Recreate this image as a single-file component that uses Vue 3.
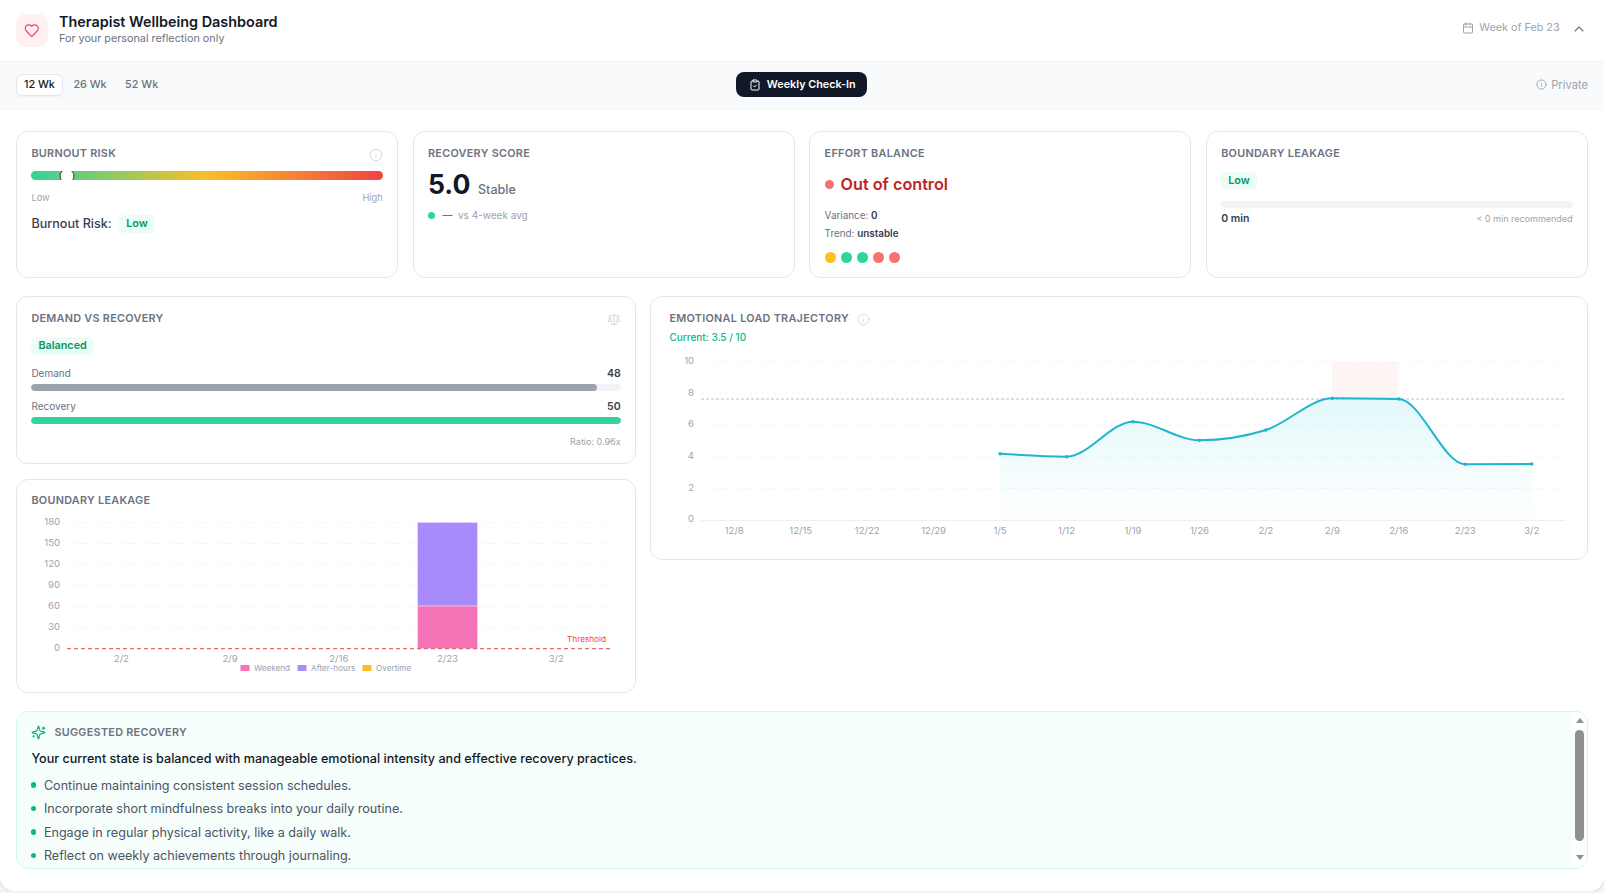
<script setup>
const gaugeStops = 'linear-gradient(90deg,#34d399 0%,#fbbf24 50%,#ef4444 100%)'

const emoTicks = ['12/8','12/15','12/22','12/29','1/5','1/12','1/19','1/26','2/2','2/9','2/16','2/23','3/2']
const emoLeft = 701, emoStep = 66.46
const emoX = i => emoLeft + emoStep * (i + 0.5)
const emoY = [10, 8, 6, 4, 2, 0].map(v => ({ v, y: 519.3 - v * 15.83 }))
const emoPts = [[4,452.7],[5,455.7],[6,420.7],[7,439.3],[8,429],[9,397.3],[10,398],[11,463.3],[12,463]]
  .map(([i, y]) => [emoX(i), y])

// monotone cubic interpolation (same shape as d3 curveMonotoneX)
function monotone(p) {
  const n = p.length, m = [], d = []
  for (let i = 0; i < n - 1; i++) d.push((p[i + 1][1] - p[i][1]) / (p[i + 1][0] - p[i][0]))
  for (let i = 1; i < n - 1; i++) {
    const s = d[i - 1] * d[i] <= 0 ? 0 : (Math.sign(d[i - 1]) + Math.sign(d[i])) * Math.min(Math.abs(d[i - 1]), Math.abs(d[i]), Math.abs((d[i - 1] + d[i]) / 2))
    m[i] = s
  }
  m[0] = (3 * d[0] - m[1]) / 2
  m[n - 1] = (3 * d[n - 2] - m[n - 2]) / 2
  let s = `M${p[0][0]},${p[0][1]}`
  for (let i = 0; i < n - 1; i++) {
    const h = (p[i + 1][0] - p[i][0]) / 3
    s += `C${p[i][0] + h},${p[i][1] + m[i] * h},${p[i + 1][0] - h},${p[i + 1][1] - m[i + 1] * h},${p[i + 1][0]},${p[i + 1][1]}`
  }
  return s
}
const emoLine = monotone(emoPts)
const emoArea = `${emoLine}L${emoPts[emoPts.length - 1][0]},519.3L${emoPts[0][0]},519.3Z`

const leakY = [180, 150, 120, 90, 60, 30, 0].map(v => ({ v, y: 648.7 - v * 0.7017 }))
const leakTicks = ['2/2', '2/9', '2/16', '2/23', '3/2'].map((t, i) => ({ t, x: 67 + 108.72 * (i + 0.5) }))
const legend = [
  { label: 'Weekend', color: '#f472b6', sx: 240.5, tx: 254 },
  { label: 'After-hours', color: '#a78bfa', sx: 297.5, tx: 311 },
  { label: 'Overtime', color: '#fbbf24', sx: 362.5, tx: 376 }
]
const effortDots = ['#fbbf24', '#34d399', '#34d399', '#f87171', '#f87171']
const tips = [
  'Continue maintaining consistent session schedules.',
  'Incorporate short mindfulness breaks into your daily routine.',
  'Engage in regular physical activity, like a daily walk.',
  'Reflect on weekly achievements through journaling.'
]
</script>

<template>
  <div class="shell">
    <header class="head">
      <div class="brand">
        <div class="heart-box">
          <svg class="ico" width="15.5" height="15.5" viewBox="0 0 24 24" stroke="#f43f5e" stroke-width="1.9"><path d="M19 14c1.49-1.46 3-3.21 3-5.5A5.5 5.5 0 0 0 16.5 3c-1.76 0-3 .5-4.5 2-1.5-1.5-2.74-2-4.5-2A5.5 5.5 0 0 0 2 8.5c0 2.3 1.5 4.05 3 5.5l7 7Z"/></svg>
        </div>
        <div class="brand-text">
          <h1>Therapist Wellbeing Dashboard</h1>
          <p>For your personal reflection only</p>
        </div>
      </div>
      <div class="head-right">
        <svg class="ico" width="12" height="12" viewBox="0 0 24 24" stroke="#9ca3af" stroke-width="2"><path d="M8 2v4M16 2v4"/><rect x="3" y="4" width="18" height="18" rx="2"/><path d="M3 10h18"/></svg>
        <span>Week of Feb 23</span>
        <svg class="ico chev" width="16" height="16" viewBox="0 0 24 24" stroke="#6b7280" stroke-width="1.7"><path d="m18 15-6-6-6 6"/></svg>
      </div>
    </header>

    <div class="bar">
      <div class="ranges">
        <button class="range on">12 Wk</button>
        <button class="range">26 Wk</button>
        <button class="range">52 Wk</button>
      </div>
      <button class="checkin">
        <svg class="ico" width="12" height="12" viewBox="0 0 24 24" stroke="#fff" stroke-width="2"><rect x="8" y="2" width="8" height="4" rx="1"/><path d="M16 4h2a2 2 0 0 1 2 2v14a2 2 0 0 1-2 2H6a2 2 0 0 1-2-2V6a2 2 0 0 1 2-2h2"/><path d="m9 14 2 2 4-4"/></svg>
        Weekly Check-In
      </button>
      <div class="private">
        <svg class="ico" width="11" height="11" viewBox="0 0 24 24" stroke="#9ca3af" stroke-width="2"><circle cx="12" cy="12" r="10"/><path d="M12 16v-4M12 8h.01"/></svg>
        Private
      </div>
    </div>

    <main class="main">
      <section class="kpis">
        <article class="card kpi">
          <div class="title-row">
            <h2>Burnout Risk</h2>
            <svg class="ico info" width="14" height="14" viewBox="0 0 24 24" stroke="#d1d5db" stroke-width="1.6"><circle cx="12" cy="12" r="10"/><path d="M12 16v-4M12 8h.01"/></svg>
          </div>
          <div class="gauge" :style="{ background: gaugeStops }"><span class="thumb"></span></div>
          <div class="gauge-ends"><span>Low</span><span>High</span></div>
          <div class="risk-line"><span>Burnout Risk:</span><span class="pill">Low</span></div>
        </article>

        <article class="card kpi">
          <h2>Recovery Score</h2>
          <div class="score"><strong>5.0</strong><span>Stable</span></div>
          <div class="delta"><i></i><b>—</b><span>vs 4-week avg</span></div>
        </article>

        <article class="card kpi">
          <h2>Effort Balance</h2>
          <div class="effort"><i></i>Out of control</div>
          <p class="meta first">Variance: <b>0</b></p>
          <p class="meta">Trend: <b>unstable</b></p>
          <div class="dots"><i v-for="(c, n) in effortDots" :key="n" :style="{ background: c }"></i></div>
        </article>

        <article class="card kpi">
          <h2>Boundary Leakage</h2>
          <span class="pill leak-pill">Low</span>
          <div class="track leak-track"></div>
          <div class="leak-foot"><b>0 min</b><span>&lt; 0 min recommended</span></div>
        </article>
      </section>

      <section class="mid">
        <div class="mid-left">
          <article class="card demand">
            <div class="title-row">
              <h2>Demand vs Recovery</h2>
              <svg class="ico" width="14" height="14" viewBox="0 0 24 24" stroke="#d1d5db" stroke-width="1.6"><path d="m16 16 3-8 3 8c-.87.65-1.92 1-3 1s-2.13-.35-3-1Z"/><path d="m2 16 3-8 3 8c-.87.65-1.92 1-3 1s-2.13-.35-3-1Z"/><path d="M7 21h10M12 3v18M3 7h2c2 0 5-1 7-2 2 1 5 2 7 2h2"/></svg>
            </div>
            <span class="pill balanced">Balanced</span>
            <div class="metric first"><span>Demand</span><b>48</b></div>
            <div class="track"><div class="fill grey" :style="{ width: '96%' }"></div></div>
            <div class="metric"><span>Recovery</span><b>50</b></div>
            <div class="track"><div class="fill green" :style="{ width: '100%' }"></div></div>
            <div class="ratio">Ratio: 0.96x</div>
          </article>

          <article class="card leakage">
            <h2>Boundary Leakage</h2>
            <svg class="chart" width="590" height="172" viewBox="31 510 590 172">
              <g v-for="g in leakY" :key="g.v">
                <line v-if="g.v" x1="67" x2="610.7" :y1="g.y" :y2="g.y" stroke="#f3f4f6" stroke-dasharray="3 3"/>
                <text class="tick" x="60" :y="g.y + 2.5" text-anchor="end">{{ g.v }}</text>
              </g>
              <rect x="417.5" y="522.3" width="60" height="84" fill="#a78bfa" stroke="#ede9fe" stroke-width=".6"/>
              <rect x="417.5" y="606" width="60" height="42.7" fill="#f472b6" stroke="#fce7f3" stroke-width=".6"/>
              <line x1="67" x2="610.7" y1="648.7" y2="648.7" stroke="#e36a6a" stroke-width="1.2" stroke-dasharray="4 3"/>
              <text class="thresh" x="606" y="642" text-anchor="end">Threshold</text>
              <text v-for="t in leakTicks" :key="t.t" class="tick" :x="t.x" y="661.5" text-anchor="middle">{{ t.t }}</text>
              <g v-for="l in legend" :key="l.label">
                <rect :x="l.sx" y="665" width="9" height="6" :fill="l.color"/>
                <text class="tick legend" :x="l.tx" y="670.5">{{ l.label }}</text>
              </g>
            </svg>
          </article>
        </div>

        <article class="card emotional">
          <div class="emo-title">
            <h2>Emotional Load Trajectory</h2>
            <svg class="ico" width="13" height="13" viewBox="0 0 24 24" stroke="#d1d5db" stroke-width="1.6"><circle cx="12" cy="12" r="10"/><path d="M12 16v-4M12 8h.01"/></svg>
          </div>
          <div class="current">Current: 3.5 / 10</div>
          <svg class="chart" width="896" height="190" viewBox="669 350 896 190">
            <defs>
              <linearGradient id="emoFill" x1="0" y1="0" x2="0" y2="1">
                <stop offset="0" stop-color="#14c8d8" stop-opacity=".12"/>
                <stop offset="1" stop-color="#14c8d8" stop-opacity="0"/>
              </linearGradient>
            </defs>
            <g v-for="g in emoY" :key="g.v">
              <line v-if="g.v" x1="701" x2="1565" :y1="g.y" :y2="g.y" stroke="#f3f4f6" stroke-dasharray="3 3"/>
              <text class="tick" x="694" :y="g.y + 2" text-anchor="end">{{ g.v }}</text>
            </g>
            <rect x="1332" y="361" width="66.5" height="37" fill="#fef2f2" fill-opacity=".8"/>
            <path :d="emoArea" fill="url(#emoFill)"/>
            <line x1="701" x2="1565" y1="398" y2="398" stroke="#b8bec8" stroke-width="1" stroke-dasharray="3 2"/>
            <line x1="701" x2="1565" y1="519.3" y2="519.3" stroke="#e5edf0"/>
            <path :d="emoLine" fill="none" stroke="#1fb5cf" stroke-width="2"/>
            <circle v-for="(p, n) in emoPts" :key="n" :cx="p[0]" :cy="p[1]" r="1.8" fill="#1fb5cf"/>
            <text v-for="(t, n) in emoTicks" :key="t" class="tick" :x="emoX(n)" y="533" text-anchor="middle">{{ t }}</text>
          </svg>
        </article>
      </section>

      <section class="recovery">
        <div class="rec-head">
          <svg class="ico" width="15" height="15" viewBox="0 0 24 24" stroke="#10b981" stroke-width="2"><path d="M9.937 15.5A2 2 0 0 0 8.5 14.063l-6.135-1.582a.5.5 0 0 1 0-.962L8.5 9.936A2 2 0 0 0 9.937 8.5l1.582-6.135a.5.5 0 0 1 .963 0L14.063 8.5A2 2 0 0 0 15.5 9.937l6.135 1.581a.5.5 0 0 1 0 .964L15.5 14.063a2 2 0 0 0-1.437 1.437l-1.582 6.135a.5.5 0 0 1-.963 0z"/><path d="M20 3v4M22 5h-4M4 17v2M5 18H3"/></svg>
          <h2>Suggested Recovery</h2>
        </div>
        <p class="lead">Your current state is balanced with manageable emotional intensity and effective recovery practices.</p>
        <ul>
          <li v-for="t in tips" :key="t">{{ t }}</li>
        </ul>
        <div class="scroll" aria-hidden="true">
          <i class="arrow up"></i>
          <i class="knob"></i>
          <i class="arrow down"></i>
        </div>
      </section>
    </main>
  </div>
</template>

<style>
html, body { background: #f3f4f6; }
</style>

<style scoped>
* { box-sizing: border-box; }
.shell {
  height: 891px;
  background: #fff;
  border-radius: 0 0 14px 14px;
  box-shadow: 0 1px 2px rgba(0, 0, 0, .12);
  font-family: Inter, "Liberation Sans", sans-serif;
  color: #111827;
  overflow: hidden;
}
h1, h2, p, ul { margin: 0; padding: 0; }
.ico { fill: none; stroke-linecap: round; stroke-linejoin: round; flex: none; display: block; }

.head {
  height: 62px;
  padding: 0 16px;
  display: flex;
  align-items: center;
  justify-content: space-between;
  border-bottom: 1px solid #f3f4f6;
}
.brand { display: flex; align-items: center; gap: 11px; }
.brand-text { margin-top: -3px; }
.heart-box {
  width: 32px; height: 33px;
  background: #fff1f2;
  border-radius: 9px;
  display: flex; align-items: center; justify-content: center;
}
h1 { font-size: 14.4px; font-weight: 600; line-height: 18px; color: #111827; }
.brand p { margin-top: 1px; font-size: 10.8px; line-height: 14px; color: #6b7280; }
.head-right {
  display: flex; align-items: center; gap: 5px;
  font-size: 10.8px; color: #9ca3af;
  margin-top: -6px;
}
.chev { margin: 3px 1px 0 6.4px; }

.bar {
  height: 48px;
  padding: 0 16px 2px;
  display: grid;
  grid-template-columns: 1fr auto 1fr;
  align-items: center;
  background: #f9fafb;
  border-bottom: 1px solid #f3f4f6;
}
.ranges { display: flex; align-items: center; gap: 2.5px; }
button { font-family: inherit; border: 0; background: none; }
.range {
  height: 22px; padding: 0 7px;
  font-size: 10.8px; font-weight: 500;
  color: #6b7280;
  border: 1px solid transparent;
  border-radius: 6px;
}
.range.on {
  background: #fff; color: #111827;
  border-color: #e5e7eb;
  box-shadow: 0 1px 2px rgba(0, 0, 0, .05);
}
.checkin {
  height: 25px; width: 131px;
  margin-left: -1.5px;
  padding: 0 0 0 2px;
  display: flex; align-items: center; justify-content: center; gap: 6px;
  background: #111827;
  color: #fff;
  font-size: 10.8px; font-weight: 600;
  border-radius: 8px;
}
.private {
  justify-self: end;
  display: flex; align-items: center; gap: 4px;
  font-size: 11.2px; color: #9ca3af;
}

.main { padding: 21px 16px 0; }
.card {
  background: #fff;
  border: 1px solid #e5e7eb;
  border-radius: 12px;
}
h2 {
  font-size: 10.8px;
  font-weight: 600;
  line-height: 14px;
  letter-spacing: .3px;
  text-transform: uppercase;
  color: #6b7280;
}
.title-row { display: flex; justify-content: space-between; align-items: flex-start; }
.kpis {
  display: grid;
  grid-template-columns: repeat(4, 1fr);
  gap: 14.4px;
}
.kpi { height: 147px; padding: 15px 14.4px; }
.info { margin-top: 1px; }

.gauge {
  position: relative;
  height: 9px;
  margin-top: 9px;
  border-radius: 5px;
  overflow: hidden;
}
.thumb {
  position: absolute;
  left: 10%; top: 50%;
  width: 15px; height: 15px;
  transform: translate(-50%, -50%);
  background: #fff;
  border: 1.5px solid #1f3f38;
  border-radius: 50%;
}
.gauge-ends {
  display: flex; justify-content: space-between;
  margin-top: 11.5px;
  font-size: 9.3px; line-height: 12px;
  color: #9ca3af;
}
.risk-line {
  display: flex; align-items: center; gap: 7.5px;
  margin-top: 11px;
  font-size: 12.6px; font-weight: 500; color: #374151;
}
.pill {
  display: inline-block;
  height: 18px; padding: 0 7px;
  font-size: 10.8px; font-weight: 600; line-height: 18px;
  color: #059669;
  background: #ecfdf5;
  border-radius: 6px;
}

.score { display: flex; align-items: baseline; gap: 7.5px; margin-top: 5px; }
.score strong { font-size: 26.6px; line-height: 36px; font-weight: 700; color: #111827; }
.score span { font-size: 12.6px; font-weight: 500; color: #6b7280; }
.delta { display: flex; align-items: center; gap: 7.5px; margin-top: 6px; font-size: 10px; line-height: 14px; color: #9ca3af; }
.delta i { width: 7px; height: 7px; border-radius: 50%; background: #34d399; }
.delta b { font-weight: 500; color: #6b7280; width: 9px; margin-right: -1px; }

.effort {
  display: flex; align-items: center; gap: 7px;
  margin-top: 13px;
  font-size: 16.2px; font-weight: 600; line-height: 20px;
  color: #c02424;
}
.effort i { width: 9px; height: 9px; border-radius: 50%; background: #f87171; }
.meta { font-size: 9.9px; line-height: 14px; color: #6b7280; margin-top: 4px; }
.meta.first { margin-top: 14px; }
.meta b { font-weight: 600; color: #374151; }
.dots { display: flex; gap: 5.2px; margin-top: 12px; }
.dots i { width: 11px; height: 11px; border-radius: 50%; }

.leak-pill { display: table; margin-top: 11px; }
.track { height: 7px; background: #f3f4f6; border-radius: 4px; overflow: hidden; }
.leak-track { margin-top: 11px; }
.leak-foot {
  display: flex; align-items: center; justify-content: space-between;
  margin-top: 4px;
  font-size: 10.5px; line-height: 14px; color: #374151;
}
.leak-foot b { font-weight: 600; }
.leak-foot span { font-size: 9px; font-weight: 400; color: #9ca3af; }

.mid {
  display: grid;
  grid-template-columns: 620px 1fr;
  gap: 14.4px;
  margin-top: 18px;
  align-items: start;
}
.mid-left { display: flex; flex-direction: column; gap: 14.5px; }
.demand { height: 168px; padding: 15px 14.4px; }
.balanced { margin-top: 11px; }
.metric {
  display: flex; justify-content: space-between; align-items: center;
  height: 14px;
  margin-top: 8px;
  font-size: 10px; color: #6b7280;
}
.metric.first { margin-top: 11px; }
.metric b { font-size: 10.5px; font-weight: 600; color: #374151; }
.metric + .track { margin-top: 4px; }
.fill { height: 100%; border-radius: 4px; }
.grey { background: #9ca3af; }
.green { background: #34d399; }
.ratio { margin-top: 11px; text-align: right; font-size: 9px; line-height: 14px; color: #9ca3af; }

.leakage { height: 214.5px; padding: 14px 14.4px 0; }
.chart { display: block; }
.leakage .chart { margin-top: 2.5px; }
.tick { font-size: 9.5px; fill: #9ca3af; font-family: Inter, "Liberation Sans", sans-serif; }
.legend { font-size: 8.2px; }
.thresh { font-size: 8.2px; fill: #ef4444; font-family: Inter, "Liberation Sans", sans-serif; }

.emotional { height: 264px; padding: 14px 18px 0; }
.emo-title { display: flex; align-items: center; gap: 8px; }
.emo-title .ico { margin-top: 2px; }
.current { margin-top: 4px; font-size: 10px; line-height: 14px; font-weight: 500; color: #10b981; }
.emotional .chart { margin-top: 6.5px; }

.recovery {
  position: relative;
  height: 158px;
  margin-top: 18px;
  padding: 13px 15px 0 14.4px;
  background: #f5fefa;
  border: 1px solid #d1fae5;
  border-radius: 12px;
  overflow: hidden;
}
.rec-head { display: flex; align-items: center; gap: 8px; }
.lead { margin-top: 9.5px; font-size: 12.6px; font-weight: 500; line-height: 18px; color: #111827; }
ul { list-style: none; margin-top: 6.3px; }
li {
  position: relative;
  padding-left: 12.5px;
  font-size: 12.6px;
  line-height: 23.4px;
  color: #4b5563;
}
li::before {
  content: "";
  position: absolute;
  left: -.5px; top: 8.5px;
  width: 5.5px; height: 5.5px;
  border-radius: 50%;
  background: #10b981;
}
.scroll {
  position: absolute;
  top: 0; right: 0; bottom: 0;
  width: 15px;
  padding-top: 6px;
  display: flex; flex-direction: column; align-items: center;
  background: #fbfffd;
}
.knob { width: 9px; height: 111px; margin: 7px 0 14px; background: #8f8f8f; border-radius: 5px; }
.arrow { width: 0; height: 0; border-left: 4.5px solid transparent; border-right: 4.5px solid transparent; }
.up { border-bottom: 5px solid #8f8f8f; }
.down { border-top: 5px solid #8f8f8f; }
</style>
